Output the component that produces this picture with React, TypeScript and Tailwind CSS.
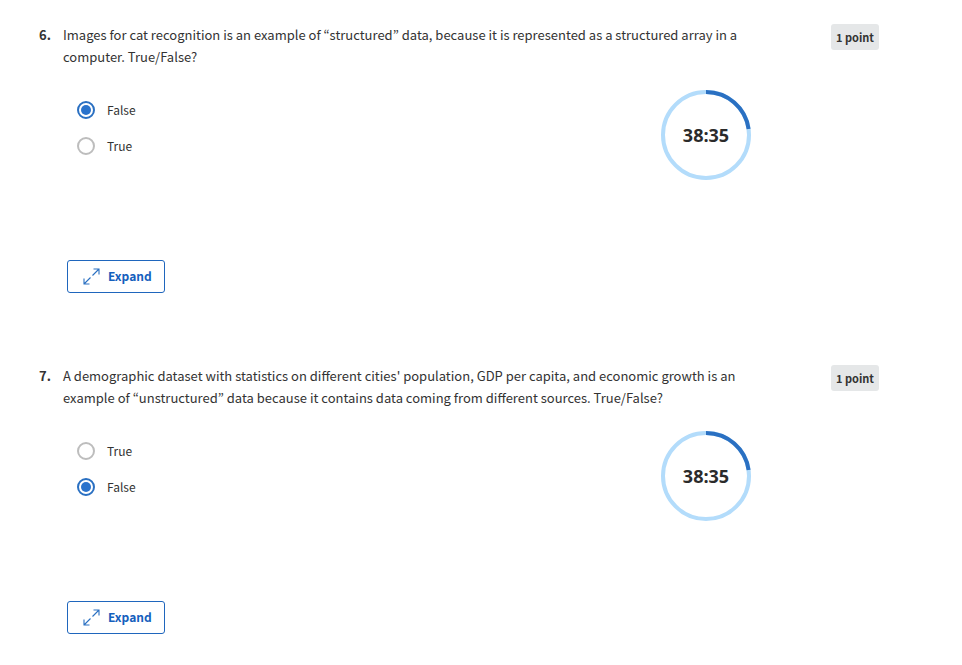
import { useState } from "react";

type Question = {
  number: number;
  text: string;
  options: string[];
  answer: string;
};

const questions: Question[] = [
  {
    number: 6,
    text: "Images for cat recognition is an example of “structured” data, because it is represented as a structured array in a computer. True/False?",
    options: ["False", "True"],
    answer: "False",
  },
  {
    number: 7,
    text: "A demographic dataset with statistics on different cities' population, GDP per capita, and economic growth is an example of “unstructured” data because it contains data coming from different sources. True/False?",
    options: ["True", "False"],
    answer: "False",
  },
];

function Timer({ time }: { time: string }) {
  return (
    <div className="grid size-[90px] shrink-0 place-items-center" role="timer">
      <svg viewBox="0 0 90 90" className="col-start-1 row-start-1 size-[90px]" fill="none" strokeWidth="4" aria-hidden="true">
        <circle cx="45" cy="45" r="43" stroke="#b3dcfb" />
        <path d="M45 2A43 43 0 0 1 87.6 39" stroke="#2a70c2" />
      </svg>
      <span className="col-start-1 row-start-1 font-['Open_Sans','Noto_Sans',sans-serif] text-lg font-bold text-[#2b2b2b]">
        {time}
      </span>
    </div>
  );
}

function ExpandIcon() {
  return (
    <svg viewBox="0 0 18 18" className="size-[18px]" fill="none" stroke="#2a70c2" strokeWidth="1.1" aria-hidden="true">
      <path d="M10.5 8.5 17 2M11.5 2H17v5.5M8.5 10.5 2 17M2 11.5V17h5.5" />
    </svg>
  );
}

function QuestionBlock({ question }: { question: Question }) {
  const [selected, setSelected] = useState(question.answer);
  return (
    <section className="flex items-start">
      <span className="w-6 shrink-0 text-[13px] leading-[22px] font-bold">{question.number}.</span>
      <div className="min-w-0 flex-1">
        <p className="text-[13px] leading-[22px]">{question.text}</p>
        <div className="mt-[22px] flex items-start justify-between pr-2 pl-3">
          <fieldset className="flex flex-col gap-4 pt-[10px] pl-[2px]">
            {question.options.map((option) => (
              <label key={option} className="flex h-5 items-center gap-3 text-xs leading-5">
                <input
                  type="radio"
                  name={`question-${question.number}`}
                  value={option}
                  checked={selected === option}
                  onChange={() => setSelected(option)}
                  className="grid size-[18px] appearance-none place-items-center rounded-full border-2 border-[#bdbdbd] bg-white before:size-2.5 before:rounded-full checked:border-[#2a70c2] checked:before:bg-[#2a73cc]"
                />
                {option}
              </label>
            ))}
          </fieldset>
          <Timer time="38:35" />
        </div>
        <button
          type="button"
          className="mt-20 ml-1 flex h-[33px] items-center gap-2 rounded-[3px] border border-[#1f66bd] pr-3 pb-[2px] pl-[14px] text-xs font-bold text-[#1460bd]"
        >
          <ExpandIcon />
          Expand
        </button>
      </div>
      <span className="ml-[72px] flex h-[26px] shrink-0 items-center rounded-[3px] bg-[#e5e7e8] px-[5px] text-[11px] font-bold">
        1 point
      </span>
    </section>
  );
}

export default function App() {
  return (
    <main className="flex flex-col gap-[72px] bg-white pt-6 pr-[83px] pb-8 pl-[39px] font-['Noto_Sans_CJK_KR','Noto_Sans',sans-serif] text-[#333333]">
      {questions.map((question) => (
        <QuestionBlock key={question.number} question={question} />
      ))}
    </main>
  );
}
